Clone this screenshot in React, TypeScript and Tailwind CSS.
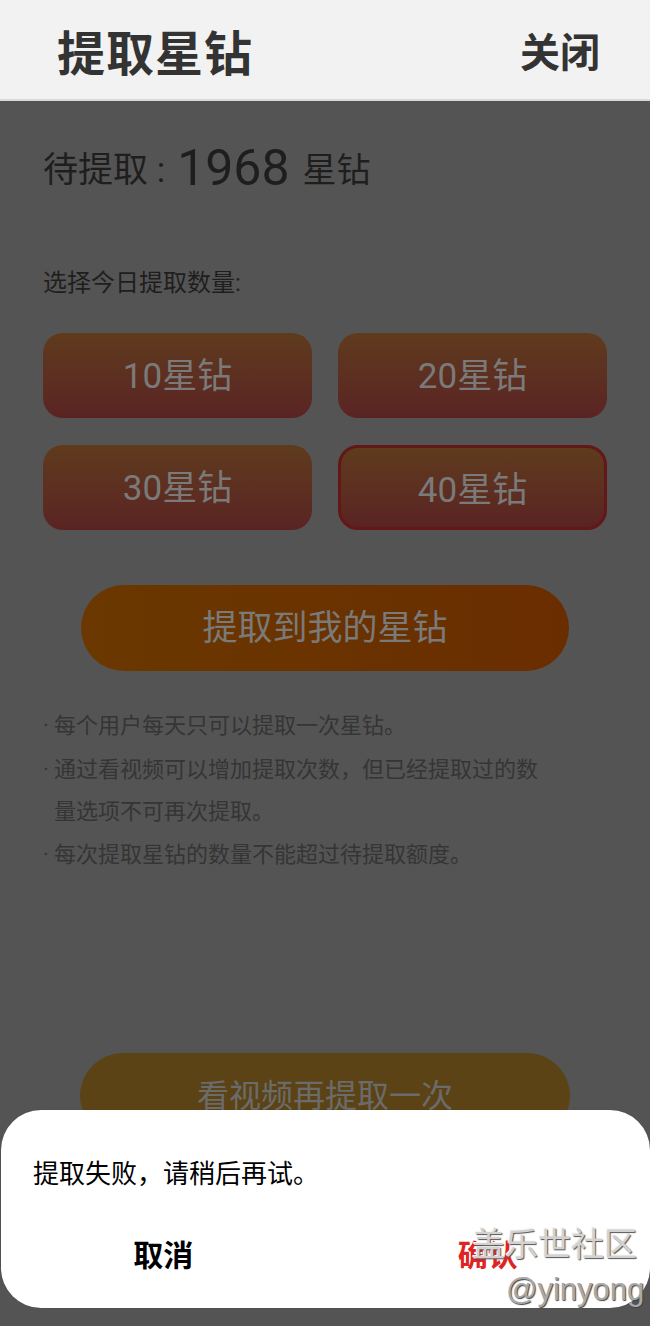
import React from "react";

const FONT = "font-['Roboto','Noto_Sans_CJK_SC',sans-serif]";

function Choice({ label, selected }: { label: string; selected?: boolean }) {
  return (
    <div
      className={`h-[85px] rounded-[20px] bg-gradient-to-b from-[#5f3b1d] to-[#5a2323] flex items-center justify-center text-[35px] text-[#7a7a7a] ${
        selected ? "border-[3px] border-[#641717]" : ""
      }`}
    >
      <span className={selected ? "mt-[7px]" : "mt-[4px]"}>{label}</span>
    </div>
  );
}

export default function App() {
  return (
    <div className={`relative w-[650px] h-[1326px] overflow-hidden bg-[#545454] ${FONT}`}>
      {/* header */}
      <div className="h-[101px] bg-[#f2f2f2] border-b-[2px] border-[#d9d9d9] flex items-center justify-between pl-[57px] pr-[50px]">
        <span className="text-[48px] font-bold text-[#333333] tracking-[1px] font-['Noto_Sans_CJK_SC',serif]">提取星钻</span>
        <span className="text-[40px] font-bold text-[#333333] font-['Noto_Sans_CJK_SC',serif]">关闭</span>
      </div>

      <div className="px-[43px]">
        <div className="mt-[44px] h-[50px] flex items-center text-[#1e1e1e]">
          <span className="text-[35px] leading-none">待提取 :</span>
          <span className="text-[50px] leading-none ml-[12px] mb-[4px]">1968</span>
          <span className="text-[34px] leading-none ml-[13px]">星钻</span>
        </div>

        <div className="mt-[73px] h-[30px] leading-[30px] text-[24px] text-[#1e1e1e]">选择今日提取数量:</div>

        <div className="mt-[35px] grid grid-cols-2 gap-x-[26px] gap-y-[27px] w-[564px]">
          <Choice label="10星钻" />
          <Choice label="20星钻" />
          <Choice label="30星钻" />
          <Choice label="40星钻" selected />
        </div>

        <div className="mt-[55px] mx-[38px] h-[86px] rounded-full bg-gradient-to-r from-[#6a3800] to-[#6a2d00] flex items-center justify-center text-[35px] text-[#7a7a7a]">
          <span className="mt-[3px]">提取到我的星钻</span>
        </div>

        <div className="mt-[33px] text-[22px] leading-[44px] text-[#353535]">
          <div className="flex">
            <span className="w-[11px]">·</span>
            <span>每个用户每天只可以提取一次星钻。</span>
          </div>
          <div className="flex">
            <span className="w-[11px] shrink-0">·</span>
            <span className="w-[500px] leading-[42px] mt-[1px]">通过看视频可以增加提取次数，但已经提取过的数量选项不可再次提取。</span>
          </div>
          <div className="flex">
            <span className="w-[11px]">·</span>
            <span>每次提取星钻的数量不能超过待提取额度。</span>
          </div>
        </div>

        <div className="mt-[176px] mx-[37px] h-[86px] rounded-full bg-[#5b4315] flex items-start justify-center pt-[19px] text-[32px] text-[#6b6b6b]">
          看视频再提取一次
        </div>
      </div>

      {/* dialog */}
      <div className="absolute left-[1px] right-[0px] top-[1110px] h-[198px] bg-white rounded-[40px] shadow-[0_0_1px_rgba(0,0,0,0.3)]">
        <div className="pl-[32px] pt-[46px] text-[26px] leading-[36px] text-black">提取失败，请稍后再试。</div>
        <div className="mt-[44px] flex">
          <div className="flex-1 text-center text-[30px] leading-[40px] font-bold text-black">取消</div>
          <div className="flex-1 text-center text-[30px] leading-[40px] font-bold text-[#e02424]">确认</div>
        </div>
      </div>

      {/* watermark */}
      <div className="absolute left-[472px] top-[1225px] text-[33px] leading-[40px] text-[#d2d2d2] [text-shadow:1px_1px_1px_#555,-1px_-1px_0_#f5f5f5]">
        盖乐世社区
      </div>
      <div className="absolute left-[506px] top-[1272px] text-[31px] leading-[36px] text-[#a9a9a9] font-['Liberation_Sans',sans-serif] [text-shadow:1px_1px_1px_#444]">
        @yinyong
      </div>
    </div>
  );
}
